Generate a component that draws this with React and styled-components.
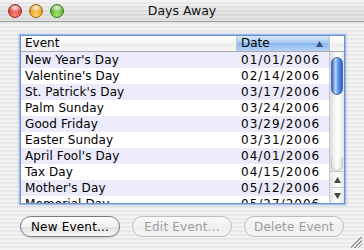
import React from 'react';
import styled, { createGlobalStyle } from 'styled-components';

const GlobalStyle = createGlobalStyle`
  html, body {
    margin: 0;
    padding: 0;
    background: #fff;
  }
  * { box-sizing: border-box; }
`;

const events = [
  { name: "New Year's Day", date: '01/01/2006' },
  { name: "Valentine's Day", date: '02/14/2006' },
  { name: "St. Patrick's Day", date: '03/17/2006' },
  { name: 'Palm Sunday', date: '03/24/2006' },
  { name: 'Good Friday', date: '03/29/2006' },
  { name: 'Easter Sunday', date: '03/31/2006' },
  { name: "April Fool's Day", date: '04/01/2006' },
  { name: 'Tax Day', date: '04/15/2006' },
  { name: "Mother's Day", date: '05/12/2006' },
  { name: 'Memorial Day', date: '05/27/2006' },
];

// Window chrome
const Window = styled.div`
  position: relative;
  width: 364px;
  height: 250px;
  display: flex;
  flex-direction: column;
  font-family: 'DejaVu Sans', 'Lucida Grande', sans-serif;
  font-size: 12px;
  color: #000;
  background: repeating-linear-gradient(
    to bottom,
    #f3f3f3 0px,
    #f3f3f3 2px,
    #e9e9e9 2px,
    #e9e9e9 4px
  );
  overflow: hidden;
`;

const TitleBar = styled.div`
  position: relative;
  height: 22px;
  flex: none;
  display: flex;
  align-items: center;
  gap: 7px;
  padding: 0 0 0 8px;
  border-bottom: 1px solid #9c9c9c;
  background:
    linear-gradient(to bottom, rgba(255,255,255,0.55), rgba(255,255,255,0) 60%),
    repeating-linear-gradient(to bottom, #e6e6e6 0px, #e6e6e6 2px, #dadada 2px, #dadada 4px);
  border-radius: 5px 5px 0 0;
`;

const Light = styled.div`
  width: 14px;
  height: 14px;
  border-radius: 50%;
  border: 1px solid ${(p) => p.$edge};
  background:
    radial-gradient(ellipse 60% 40% at 50% 22%, rgba(255,255,255,0.9) 0, rgba(255,255,255,0) 100%),
    radial-gradient(circle at 50% 85%, ${(p) => p.$glow} 0, ${(p) => p.$color} 70%);
`;

const Title = styled.div`
  position: absolute;
  left: 0;
  right: 0;
  top: 0;
  line-height: 22px;
  text-align: center;
  font-size: 12.5px;
  color: #111;
  pointer-events: none;
`;

const Body = styled.div`
  flex: 1;
  display: flex;
  flex-direction: column;
  padding: 13px 19px 0 20px;
  gap: 12px;
`;

// Table
const TableFrame = styled.div`
  height: 169px;
  display: grid;
  grid-template-columns: 1fr 15px;
  grid-template-rows: 16px 1fr;
  border: 1px solid #6f93cf;
  box-shadow: 0 0 0 1px rgba(120, 160, 220, 0.55), 0 0 2px 2px rgba(140, 175, 230, 0.35);
  background: #fff;
  overflow: hidden;
`;

const HeaderRow = styled.div`
  display: grid;
  grid-template-columns: 216px 1fr;
  border-bottom: 1px solid #a9a9a9;
`;

const HeaderCell = styled.div`
  display: flex;
  align-items: center;
  justify-content: space-between;
  padding: 0 6px 0 4px;
  line-height: 15px;
  border-right: ${(p) => (p.$active ? 'none' : '1px solid #c4c4c4')};
  background: ${(p) =>
    p.$active
      ? 'linear-gradient(to bottom, #d8e8fb 0%, #a9cbf3 45%, #8bb7ee 50%, #b6d5f8 100%)'
      : 'linear-gradient(to bottom, #ffffff 0%, #f4f4f4 50%, #ebebeb 51%, #f6f6f6 100%)'};
`;

const HeaderCorner = styled.div`
  border-bottom: 1px solid #a9a9a9;
  border-left: 1px solid #c4c4c4;
  background: linear-gradient(to bottom, #ffffff 0%, #f4f4f4 50%, #ebebeb 51%, #f6f6f6 100%);
`;

const Rows = styled.div`
  overflow: hidden;
`;

const Row = styled.div`
  display: grid;
  grid-template-columns: 216px 1fr;
  height: 16px;
  line-height: 16px;
  background: ${(p) => (p.$striped ? '#ebebfb' : '#ffffff')};
`;

const Cell = styled.div`
  padding-left: 4px;
  white-space: nowrap;
  overflow: hidden;
  letter-spacing: ${(p) => (p.$date ? '1px' : '0.1px')};
`;

// Scrollbar
const Scrollbar = styled.div`
  display: flex;
  flex-direction: column;
  border-left: 1px solid #c9c9c9;
  background: linear-gradient(to right, #d9d9d9 0%, #f3f3f3 30%, #ffffff 60%, #e6e6e6 100%);
`;

const Track = styled.div`
  flex: 1;
  padding: 5px 1px 0 1px;
`;

const Thumb = styled.div`
  height: 38px;
  border-radius: 7px;
  border: 1px solid #3d6bbf;
  background:
    linear-gradient(to right, rgba(255,255,255,0) 0%, rgba(255,255,255,0.55) 35%, rgba(255,255,255,0) 60%),
    linear-gradient(to right, #2f63c8 0%, #6ea4ee 45%, #4f8ae3 70%, #2c60c4 100%);
`;

const TrackEnd = styled.div`
  height: 14px;
  margin: 0 1px;
  border-radius: 0 0 7px 7px;
  border: 1px solid #c4c4c4;
  border-top: none;
  background: linear-gradient(to right, #e4e4e4, #ffffff 55%, #e0e0e0);
`;

const ArrowButton = styled.div`
  height: 16px;
  display: flex;
  align-items: center;
  justify-content: center;
  border-top: 1px solid #c9c9c9;
  background: linear-gradient(to right, #e6e6e6, #ffffff 55%, #e6e6e6);
`;

const Arrow = ({ down }) => (
  <svg width="7" height="6" viewBox="0 0 7 6">
    <polygon points={down ? '0,0 7,0 3.5,6' : '3.5,0 7,6 0,6'} fill="#4a4a4a" />
  </svg>
);

const SortArrow = () => (
  <svg width="7" height="6" viewBox="0 0 7 6">
    <polygon points="3.5,0 7,6 0,6" fill="#3a4f78" />
  </svg>
);

// Buttons
const ButtonRow = styled.div`
  display: flex;
  gap: 12px;
`;

const Button = styled.button`
  width: 100px;
  height: 21px;
  border-radius: 11px;
  font-family: inherit;
  font-size: 12px;
  padding: 0;
  letter-spacing: 0.2px;
  color: ${(p) => (p.disabled ? '#9d9d9d' : '#000')};
  border: 1px solid ${(p) => (p.disabled ? '#bdbdbd' : '#7b7b7b')};
  background: ${(p) =>
    p.disabled
      ? 'linear-gradient(to bottom, #fafafa 0%, #efefef 55%, #f6f6f6 100%)'
      : 'linear-gradient(to bottom, #ffffff 0%, #f0f0f0 50%, #e2e2e2 55%, #f7f7f7 100%)'};
  box-shadow: ${(p) => (p.disabled ? 'none' : '0 1px 1px rgba(0,0,0,0.15)')};
`;

const Grip = styled.div`
  position: absolute;
  right: 2px;
  bottom: 2px;
  width: 11px;
  height: 11px;
  background: linear-gradient(
    135deg,
    transparent 0 45%,
    #9a9a9a 45% 52%,
    transparent 52% 62%,
    #9a9a9a 62% 69%,
    transparent 69% 79%,
    #9a9a9a 79% 86%,
    transparent 86%
  );
`;

export default function App() {
  return (
    <>
      <GlobalStyle />
      <Window>
        <TitleBar>
          <Light $color="#d0322b" $glow="#ff8a7e" $edge="#8e2a24" />
          <Light $color="#e08c10" $glow="#ffd766" $edge="#9a6414" />
          <Light $color="#4fa523" $glow="#a9ea6a" $edge="#3b7420" />
          <Title>Days Away</Title>
        </TitleBar>
        <Body>
          <TableFrame>
            <HeaderRow>
              <HeaderCell>Event</HeaderCell>
              <HeaderCell $active>
                Date
                <SortArrow />
              </HeaderCell>
            </HeaderRow>
            <HeaderCorner />
            <Rows>
              {events.map((e, i) => (
                <Row key={e.name} $striped={i % 2 === 0}>
                  <Cell>{e.name}</Cell>
                  <Cell $date>{e.date}</Cell>
                </Row>
              ))}
            </Rows>
            <Scrollbar>
              <Track>
                <Thumb />
              </Track>
              <TrackEnd />
              <ArrowButton>
                <Arrow />
              </ArrowButton>
              <ArrowButton>
                <Arrow down />
              </ArrowButton>
            </Scrollbar>
          </TableFrame>
          <ButtonRow>
            <Button>New Event...</Button>
            <Button disabled>Edit Event...</Button>
            <Button disabled>Delete Event</Button>
          </ButtonRow>
        </Body>
        <Grip />
      </Window>
    </>
  );
}
